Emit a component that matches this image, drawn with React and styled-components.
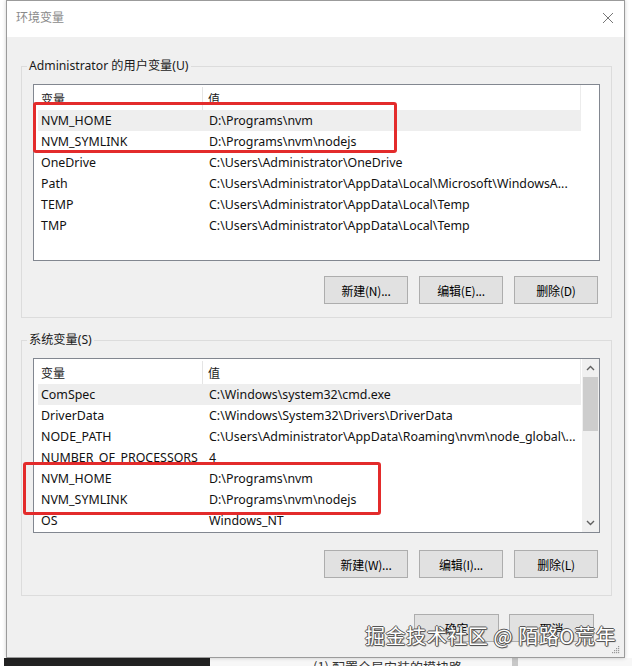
import React from "react";
import styled, { createGlobalStyle } from "styled-components";

const GlobalStyle = createGlobalStyle`
  html, body {
    margin: 0;
    padding: 0;
    background: #ffffff;
  }
  body {
    font-family: "Segoe UI", "Noto Sans", "Noto Sans CJK SC", sans-serif;
    font-size: 12px;
    color: #000;
  }
`;

const Page = styled.div`
  width: 632px;
  height: 666px;
  overflow: hidden;
  display: flex;
  flex-direction: column;
`;

const Window = styled.div`
  position: relative;
  margin-left: 6px;
  width: 619px;
  height: 658px;
  box-sizing: border-box;
  border: 1px solid #9b9b9b;
  background: #f0f0f0;
  box-shadow: 0 0 4px rgba(0, 0, 0, 0.2);
  display: flex;
  flex-direction: column;
`;

const TitleBar = styled.div`
  height: 36px;
  background: #fff;
  display: flex;
  align-items: center;
  justify-content: space-between;
  padding: 0 10px 0 9px;
`;

const Title = styled.span`
  font-family: "Noto Sans CJK SC", sans-serif;
  font-size: 12px;
  color: #8a8a8a;
  margin-top: -5px;
`;

const CloseBtn = styled.div`
  width: 12px;
  height: 12px;
  display: flex;
  margin-top: -3px;
`;

const Body = styled.div`
  flex: 1;
  padding: 29px 12px 15px 14px;
  display: flex;
  flex-direction: column;
`;

const Group = styled.div`
  border: 1px solid #dcdcdc;
  padding: 0 11px ${(p) => p.$bottom}px;
  margin-top: ${(p) => p.$top}px;
`;

const Caption = styled.div`
  width: fit-content;
  margin: -9px 0 0 -6px;
  padding: 0 2px;
  line-height: 16px;
  height: 16px;
  background: #f0f0f0;
  font-size: 12.2px;
  color: #1a1a1a;
`;

const ListBox = styled.div`
  position: relative;
  margin-top: 10px;
  height: ${(p) => p.$height}px;
  box-sizing: border-box;
  border: 1px solid #828790;
  background: #fff;
  display: flex;
`;

const ListContent = styled.div`
  width: 543px;
  margin-left: 4px;
  overflow: hidden;
  font-size: 12.4px;
`;

const HeaderRow = styled.div`
  height: 25px;
  display: flex;
  color: #1a1a1a;
  border-right: 1px solid #ececec;
  box-sizing: border-box;
`;

const HeaderCell = styled.div`
  margin-top: 2px;
  display: flex;
  align-items: center;
  box-sizing: border-box;
  ${(p) =>
    p.$first
      ? "width: 165px; padding-left: 3px; border-right: 1px solid #e5e5e5;"
      : "flex: 1; padding-left: 5px;"}
  font-family: "Noto Sans CJK SC", sans-serif;
  font-size: 12px;
`;

const Row = styled.div`
  height: 21px;
  display: flex;
  align-items: center;
  background: ${(p) => (p.$selected ? "#eeeeee" : "transparent")};
  color: #111;
`;

const NameCell = styled.div`
  width: 165px;
  flex-shrink: 0;
  padding-left: 3px;
  box-sizing: border-box;
  white-space: nowrap;
  overflow: hidden;
`;

const ValueCell = styled.div`
  flex: 1;
  padding-left: 6px;
  white-space: nowrap;
  overflow: hidden;
`;

const ScrollBar = styled.div`
  margin-left: auto;
  width: 17px;
  background: #f0f0f0;
  display: flex;
  flex-direction: column;
`;

const ScrollArrow = styled.div`
  height: 18px;
  display: flex;
  align-items: center;
  justify-content: center;
`;

const ScrollThumb = styled.div`
  height: 54px;
  margin: 0 1px;
  background: #cdcdcd;
`;

const Spacer = styled.div`
  flex: 1;
`;

const ButtonRow = styled.div`
  display: flex;
  justify-content: flex-end;
  gap: 11px;
  padding-right: 2px;
  margin-top: ${(p) => p.$top}px;
`;

const Button = styled.div`
  width: ${(p) => p.$w || 84}px;
  height: 28px;
  box-sizing: border-box;
  border: 1px solid #adadad;
  background: #e1e1e1;
  display: flex;
  align-items: center;
  justify-content: center;
  font-family: "Noto Sans CJK SC", sans-serif;
  font-size: 12px;
  color: #000;
  letter-spacing: -0.2px;
`;

const DialogRow = styled.div`
  display: flex;
  justify-content: flex-end;
  gap: 10px;
  margin-top: 18px;
  padding-right: 18px;
`;

const Highlight = styled.div`
  position: absolute;
  left: ${(p) => p.$x}px;
  top: ${(p) => p.$y}px;
  width: ${(p) => p.$w}px;
  height: ${(p) => p.$h}px;
  box-sizing: border-box;
  border: 3px solid #e32b2b;
  border-radius: 3px;
  pointer-events: none;
`;

const Watermark = styled.div`
  position: absolute;
  right: 8px;
  bottom: 9px;
  font-family: "Noto Sans CJK SC", sans-serif;
  font-size: 20px;
  line-height: 24px;
  color: #ffffff;
  letter-spacing: 0.6px;
  text-shadow: 1px 0 0 #555, -1px 0 0 #555, 0 1px 0 #555, 0 -1px 0 #555,
    1px 1px 1px #666;
  white-space: nowrap;
`;

const Grip = styled.div`
  position: absolute;
  right: 4px;
  bottom: 3px;
  display: flex;
`;

const BottomStrip = styled.div`
  height: 8px;
  display: flex;
  overflow: hidden;
`;

const DarkBlock = styled.div`
  width: 206px;
  margin-left: 4px;
  background: #222;
`;

const LightBlock = styled.div`
  flex: 1;
  background: #f7f7f7;
  display: flex;
  align-items: flex-start;
  padding-left: 103px;
  gap: 50px;
`;

const StripText = styled.span`
  font-family: "Noto Sans CJK SC", sans-serif;
  font-size: 13px;
  line-height: 14px;
  color: #333;
  margin-top: 2px;
  white-space: nowrap;
`;

const StripBar = styled.div`
  width: 6px;
  height: 8px;
  background: #c8c8c8;
`;

const Chevron = ({ up }) => (
  <svg width="9" height="6" viewBox="0 0 9 6">
    <path
      d={up ? "M1 5 L4.5 1.5 L8 5" : "M1 1 L4.5 4.5 L8 1"}
      fill="none"
      stroke="#606060"
      strokeWidth="1.4"
    />
  </svg>
);

const userVars = [
  ["NVM_HOME", "D:\\Programs\\nvm"],
  ["NVM_SYMLINK", "D:\\Programs\\nvm\\nodejs"],
  ["OneDrive", "C:\\Users\\Administrator\\OneDrive"],
  ["Path", "C:\\Users\\Administrator\\AppData\\Local\\Microsoft\\WindowsA..."],
  ["TEMP", "C:\\Users\\Administrator\\AppData\\Local\\Temp"],
  ["TMP", "C:\\Users\\Administrator\\AppData\\Local\\Temp"],
];

const sysVars = [
  ["ComSpec", "C:\\Windows\\system32\\cmd.exe"],
  ["DriverData", "C:\\Windows\\System32\\Drivers\\DriverData"],
  ["NODE_PATH", "C:\\Users\\Administrator\\AppData\\Roaming\\nvm\\node_global\\..."],
  ["NUMBER_OF_PROCESSORS", "4"],
  ["NVM_HOME", "D:\\Programs\\nvm"],
  ["NVM_SYMLINK", "D:\\Programs\\nvm\\nodejs"],
  ["OS", "Windows_NT"],
];

function VarList({ vars }) {
  return (
    <ListContent>
      <HeaderRow>
        <HeaderCell $first>变量</HeaderCell>
        <HeaderCell>值</HeaderCell>
      </HeaderRow>
      {vars.map(([name, value], i) => (
        <Row key={name} $selected={i === 0}>
          <NameCell>{name}</NameCell>
          <ValueCell>{value}</ValueCell>
        </Row>
      ))}
    </ListContent>
  );
}

export default function App() {
  return (
    <Page>
      <GlobalStyle />
      <Window>
        <TitleBar>
          <Title>环境变量</Title>
          <CloseBtn>
            <svg width="12" height="12" viewBox="0 0 12 12">
              <path d="M1 1 L11 11 M11 1 L1 11" stroke="#777" strokeWidth="1" />
            </svg>
          </CloseBtn>
        </TitleBar>
        <Body>
          <Group $top={0} $bottom={13}>
            <Caption>Administrator 的用户变量(U)</Caption>
            <ListBox $height={177}>
              <VarList vars={userVars} />
              <Highlight $x={-1} $y={17} $w={364} $h={51} />
            </ListBox>
            <ButtonRow $top={15}>
              <Button>新建(N)...</Button>
              <Button>编辑(E)...</Button>
              <Button>删除(D)</Button>
            </ButtonRow>
          </Group>
          <Group $top={22} $bottom={17}>
            <Caption>系统变量(S)</Caption>
            <ListBox $height={175}>
              <VarList vars={sysVars} />
              <ScrollBar>
                <ScrollArrow>
                  <Chevron up />
                </ScrollArrow>
                <ScrollThumb />
                <Spacer />
                <ScrollArrow>
                  <Chevron />
                </ScrollArrow>
              </ScrollBar>
              <Highlight $x={-11} $y={103} $w={358} $h={53} />
            </ListBox>
            <ButtonRow $top={17}>
              <Button>新建(W)...</Button>
              <Button>编辑(I)...</Button>
              <Button>删除(L)</Button>
            </ButtonRow>
          </Group>
          <DialogRow>
            <Button $w={85}>确定</Button>
            <Button $w={85}>取消</Button>
          </DialogRow>
        </Body>
        <Grip>
          <svg width="8" height="8" viewBox="0 0 8 8">
            {[[6, 0], [4, 2], [6, 2], [2, 4], [4, 4], [6, 4], [0, 6], [2, 6], [4, 6], [6, 6]].map(
              ([x, y]) => (
                <rect key={`${x}-${y}`} x={x} y={y} width="1.2" height="1.2" fill="#999" />
              )
            )}
          </svg>
        </Grip>
        <Watermark>掘金技术社区 @ 陌路O荒年</Watermark>
      </Window>
      <BottomStrip>
        <DarkBlock />
        <LightBlock>
          <StripText>(1) 配置全局安装的模块路</StripText>
          <StripBar />
        </LightBlock>
      </BottomStrip>
    </Page>
  );
}
